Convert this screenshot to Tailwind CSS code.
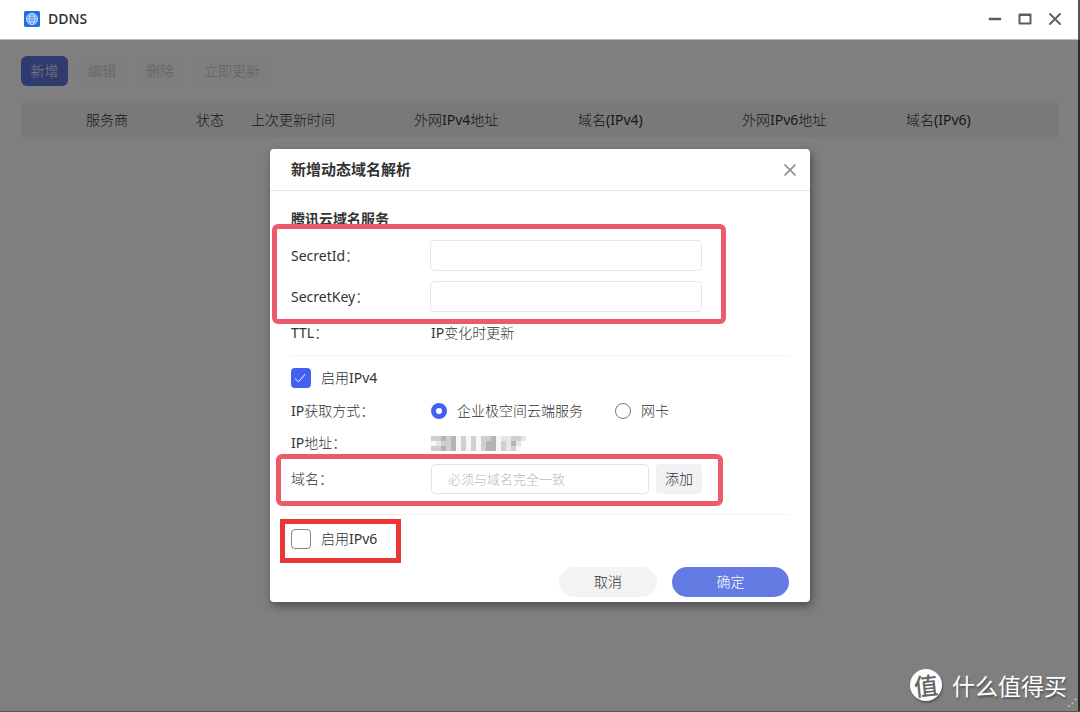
<!DOCTYPE html>
<html lang="zh-CN">
<head>
<meta charset="utf-8">
<meta name="viewport" content="width=device-width, initial-scale=1">
<title>DDNS</title>
<script src="https://cdn.jsdelivr.net/npm/@tailwindcss/browser@4"></script>
</head>
<body class="bg-white font-['Noto_Sans','Noto_Sans_CJK_SC_Light','Noto_Sans_CJK_SC',sans-serif] text-sm font-normal text-[#333]">
<div class="flex min-h-screen flex-col border-r-2 border-b border-[#555]">

  <header class="flex h-10 items-center border-b border-[#bbb] pr-[14px] pb-px pl-6">
    <svg class="size-4" viewBox="0 0 16 16" fill="none" stroke="#c4dcfb" stroke-width="0.9" aria-hidden="true">
      <rect width="16" height="16" rx="1.5" fill="#1c70e8" stroke="none"/>
      <circle cx="8" cy="8" r="5.6" fill="#5b9df5"/>
      <ellipse cx="8" cy="8" rx="2.7" ry="5.6"/>
      <path d="M2.6 8h10.8M3.4 5.2h9.2M3.4 10.8h9.2"/>
    </svg>
    <h1 class="ml-2 font-['Open_Sans','Noto_Sans',sans-serif] text-sm font-semibold">DDNS</h1>
    <div class="ml-auto flex gap-3 text-[#5c5c5c]">
      <button type="button" aria-label="最小化" class="flex size-[18px] items-center justify-center">
        <svg class="size-[14px]" viewBox="0 0 14 14" stroke="currentColor" stroke-width="2.4" stroke-linecap="round"><path d="M1.8 7h10.4"/></svg>
      </button>
      <button type="button" aria-label="最大化" class="flex size-[18px] items-center justify-center">
        <svg class="size-[14px]" viewBox="0 0 14 14" fill="none" stroke="currentColor" stroke-width="2" stroke-linejoin="round"><path d="M1.5 2.6h11v9h-11z"/><path d="M1.5 3h11"/></svg>
      </button>
      <button type="button" aria-label="关闭窗口" class="flex size-[18px] items-center justify-center">
        <svg class="size-[14px]" viewBox="0 0 14 14" stroke="currentColor" stroke-width="1.8" stroke-linecap="round"><path d="M2 2l10 10M12 2L2 12"/></svg>
      </button>
    </div>
  </header>

  <main class="relative flex-1">
    <div class="px-5 pt-4">
      <div class="flex gap-[10px]">
        <button type="button" class="ml-px h-[30px] w-[47px] rounded-md bg-[#5e75dc] text-[#f4f6fb]">新增</button>
        <button type="button" disabled class="h-[30px] w-12 rounded-md bg-[#fcfcfc] text-[#c4c4c4]">编辑</button>
        <button type="button" disabled class="h-[30px] w-12 rounded-md bg-[#fcfcfc] text-[#c4c4c4]">删除</button>
        <button type="button" disabled class="h-[30px] w-[76px] rounded-md bg-[#fcfcfc] text-[#c4c4c4]">立即更新</button>
      </div>
      <table class="mt-[17px] ml-px w-full table-fixed bg-[#f2f3f3] text-left">
        <colgroup>
          <col class="w-[65px]"><col class="w-[110px]"><col class="w-[55px]"><col class="w-[163px]"><col class="w-[164px]"><col class="w-[164px]"><col class="w-[164px]"><col>
        </colgroup>
        <thead>
          <tr class="h-[34px]">
            <td></td>
            <th class="font-normal">服务商</th>
            <th class="font-normal">状态</th>
            <th class="font-normal">上次更新时间</th>
            <th class="font-normal">外网IPv4地址</th>
            <th class="font-normal">域名(IPv4)</th>
            <th class="font-normal">外网IPv6地址</th>
            <th class="font-normal">域名(IPv6)</th>
          </tr>
        </thead>
      </table>
    </div>

    <div class="absolute inset-0 -right-0.5 flex items-center justify-center bg-black/50">
      <section role="dialog" aria-labelledby="dlg-title" class="relative w-[540px] rounded-sm bg-white shadow-[2px_4px_10px_rgba(0,0,0,0.4)]">
        <div class="flex h-[42px] items-center justify-between border-b border-[#e4e4e4] pr-3 pl-[21px]">
          <h2 id="dlg-title" class="font-['Noto_Sans','Noto_Sans_CJK_SC',sans-serif] text-[15px] font-bold">新增动态域名解析</h2>
          <button type="button" aria-label="关闭" class="flex size-4 items-center justify-center text-[#8a8a8a]">
            <svg class="size-[14px]" viewBox="0 0 14 14" stroke="currentColor" stroke-width="1.7" stroke-linecap="round"><path d="M2 2l10 10M12 2L2 12"/></svg>
          </button>
        </div>

        <form class="px-[21px] pt-[18px] pb-[5px]">
          <h3 class="font-['Noto_Sans','Noto_Sans_CJK_SC',sans-serif] font-bold">腾讯云域名服务</h3>

          <div class="mt-[11px] flex items-center">
            <label for="sid" class="w-[139px]">SecretId：</label>
            <input id="sid" type="text" class="h-[31px] w-[272px] rounded border border-[#e6e6e6] px-4 outline-none">
          </div>
          <div class="mt-[10px] flex items-center">
            <label for="skey" class="w-[139px]">SecretKey：</label>
            <input id="skey" type="text" class="h-[31px] w-[272px] rounded border border-[#e6e6e6] px-4 outline-none">
          </div>
          <div class="mt-[11px] flex items-center">
            <span class="w-[140px]">TTL：</span>
            <span>IP变化时更新</span>
          </div>

          <div class="mt-3 border-t border-[#f4f4f4] pt-3">
            <label class="flex h-5 items-center gap-[10px]">
              <input type="checkbox" checked class="peer sr-only">
              <svg class="size-5 text-[#4261f0]" viewBox="0 0 20 20" fill="none" aria-hidden="true">
                <rect width="20" height="20" rx="4" fill="currentColor"/>
                <path d="M4.300 10.800l3.200 3 6.500-7.500" stroke="#fff" stroke-width="1" stroke-linecap="round" stroke-linejoin="round"/>
              </svg>
              启用IPv4
            </label>
          </div>
          <fieldset class="mt-[13px] flex h-5 items-center">
            <legend class="float-left w-[140px]">IP获取方式：</legend>
            <label class="flex items-center gap-[10px]">
              <input type="radio" name="mode" checked class="size-4 appearance-none rounded-full border-[5px] border-[#4261f0] bg-white">企业极空间云端服务
            </label>
            <label class="ml-8 flex items-center gap-[10px]">
              <input type="radio" name="mode" class="size-4 appearance-none rounded-full border border-[#777] bg-white">网卡
            </label>
          </fieldset>
          <div class="mt-3 flex items-center">
            <span class="w-[140px]">IP地址：</span>
            <svg class="h-[15px] w-[95px]" viewBox="0 0 19 3" shape-rendering="crispEdges" role="img" aria-label="已隐藏">
              <path fill="#e6e6e6" d="M0 0h19v1h-1v1h-1v1H0z"/>
              <path fill="#f6f6f6" d="M0 1h1v1H0zM5 0h1v3H5zM7 0h1v3H7zM9 0h1v3H9zM13 0h1v3h-1zM17 2h1v1h-1z"/>
              <path fill="#cfcfcf" d="M0 0h2v1H0zM2 1h1v1H2zM0 2h2v1H0zM3 0h1v3H3zM6 0h1v3H6zM8 0h1v3H8zM10 0h1v3h-1zM11 0h1v1h-1zM14 1h1v2h-1zM16 0h2v1h-2zM16 2h1v1h-1z"/>
              <path fill="#b4b4b4" d="M2 0h1v1H2zM4 0h1v3H4zM2 2h1v1H2zM11 1h2v2h-2zM12 0h1v1h-1zM16 1h1v1h-1z"/>
            </svg>
          </div>
          <div class="mt-[11px] flex items-center">
            <label for="domain" class="w-[140px]">域名：</label>
            <input id="domain" type="text" placeholder="必须与域名完全一致" class="h-[30px] w-[218px] rounded border border-[#e2e2e2] px-4 text-[13px] outline-none placeholder:text-[#b8b8b8]">
            <button type="button" class="ml-[7px] h-[30px] w-[46px] rounded bg-[#f1f2f3]">添加</button>
          </div>

          <div class="mt-5 border-t border-[#f4f4f4] pt-[14px]">
            <label class="flex h-5 items-center gap-[10px]">
              <input type="checkbox" class="size-5 appearance-none rounded border border-[#888] bg-white">启用IPv6
            </label>
          </div>

          <div class="mt-[18px] flex justify-end gap-[15px]">
            <button type="button" class="h-[30px] w-[98px] rounded-full bg-[#f1f3f4]">取消</button>
            <button type="submit" class="h-[30px] w-[117px] rounded-full bg-[#637be3] font-normal text-white">确定</button>
          </div>
        </form>

        <div class="pointer-events-none absolute top-[75px] left-[2px] h-[100px] w-[454px] rounded-md border-[5px] border-[#eb5b69]"></div>
        <div class="pointer-events-none absolute top-[305px] left-[6px] h-[52px] w-[447px] rounded-md border-[5px] border-[#eb5b69]"></div>
        <div class="pointer-events-none absolute top-[370px] left-[10px] h-[44px] w-[121px] border-[5px] border-[#eb3636]"></div>
      </section>
    </div>

    <div class="absolute right-[9px] bottom-[10px] flex items-center gap-[10px] font-['Noto_Sans_CJK_SC',sans-serif] text-white">
      <span class="flex size-8 items-center justify-center rounded-full bg-white text-[24px] leading-none font-medium text-[#666] shadow-[1px_2px_2px_rgba(0,0,0,0.3)]"><span class="-rotate-6">值</span></span>
      <span class="pr-0.5 text-[23px] leading-8 font-normal text-shadow-[1px_2px_2px_rgba(0,0,0,0.35)]">什么值得买</span>
    </div>
    <svg class="absolute right-0 bottom-0.5 size-3" viewBox="0 0 12 12" fill="#c4c4c4" aria-hidden="true"><circle cx="9.500" cy="2.500" r="1"/><circle cx="6.500" cy="6" r="1"/><circle cx="3" cy="9" r="1"/></svg>
  </main>
</div>
</body>
</html>
